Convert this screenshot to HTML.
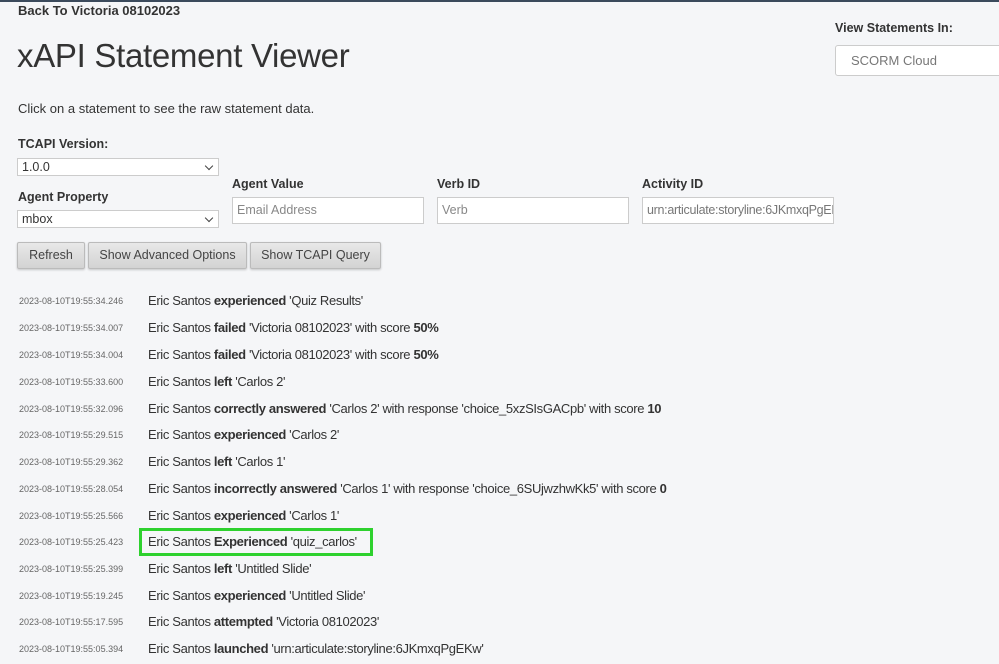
<!DOCTYPE html>
<html><head><meta charset="utf-8"><style>
html,body{margin:0;padding:0}
body{width:999px;height:664px;background:#f5f6f8;font-family:"Liberation Sans",Arial,sans-serif;color:#333;position:relative;overflow:hidden}
.a{position:absolute;white-space:nowrap}
.topbar{position:absolute;left:0;top:0;width:999px;height:2px;background:#3b4a5c}
.lbl{font-weight:bold;font-size:12.5px;color:#333}
.sel{position:absolute;background:#fff;border:1px solid #ccc;font-size:12.5px;line-height:17px;padding-left:4px;box-sizing:border-box;height:18px}
.sel:after{content:"";position:absolute;right:6px;top:4px;width:5px;height:5px;border-right:1.3px solid #444;border-bottom:1.3px solid #444;transform:rotate(45deg)}
.inp{position:absolute;height:27px;background:#fff;border:1px solid #ccc;box-sizing:border-box;font-size:12.5px;color:#888;line-height:25px;padding-left:4px;overflow:hidden;white-space:nowrap}
.btn{position:absolute;top:242px;height:27px;background:linear-gradient(#e8e8e8,#d3d3d3);border:1px solid #bbb;border-radius:2px;box-sizing:border-box;font-size:12.5px;color:#444;line-height:25px;text-align:center;box-shadow:0 1px 2px rgba(0,0,0,.2)}
.ts{position:absolute;left:19px;font-size:9px;color:#666;white-space:nowrap}
.st{position:absolute;left:148px;font-size:13px;color:#333;white-space:nowrap;letter-spacing:-0.35px}
</style></head><body>
<div class="topbar"></div>
<div class="a lbl" style="left:18px;top:3px;font-size:13px">Back To Victoria 08102023</div>
<div class="a" style="left:17px;top:37px;font-size:33px;color:#333;letter-spacing:-0.3px">xAPI Statement Viewer</div>
<div class="a" style="left:18px;top:101px;font-size:13px">Click on a statement to see the raw statement data.</div>
<div class="a lbl" style="left:18px;top:137px">TCAPI Version:</div>
<div class="sel" style="left:17px;top:158px;width:202px">1.0.0</div>
<div class="a lbl" style="left:18px;top:190px">Agent Property</div>
<div class="sel" style="left:17px;top:210px;width:202px">mbox</div>
<div class="a lbl" style="left:232px;top:177px">Agent Value</div>
<div class="inp" style="left:232px;top:197px;width:192px">Email Address</div>
<div class="a lbl" style="left:437px;top:177px">Verb ID</div>
<div class="inp" style="left:437px;top:197px;width:192px">Verb</div>
<div class="a lbl" style="left:642px;top:177px">Activity ID</div>
<div class="inp" style="left:642px;top:197px;width:192px;color:#777;letter-spacing:-0.3px">urn:articulate:storyline:6JKmxqPgEKw</div>
<div class="a lbl" style="left:835px;top:21px">View Statements In:</div>
<div class="inp" style="left:835px;top:45px;width:180px;height:31px;line-height:29px;padding-left:15px;border-radius:3px;font-size:13px;color:#777">SCORM Cloud</div>
<div class="btn" style="left:17px;width:68px">Refresh</div>
<div class="btn" style="left:88px;width:159px">Show Advanced Options</div>
<div class="btn" style="left:250px;width:131px">Show TCAPI Query</div>

<div class="ts" style="top:296px">2023-08-10T19:55:34.246</div><div class="st" style="top:293px">Eric Santos <b>experienced</b> 'Quiz Results'</div>
<div class="ts" style="top:323px">2023-08-10T19:55:34.007</div><div class="st" style="top:320px">Eric Santos <b>failed</b> 'Victoria 08102023' with score <b>50%</b></div>
<div class="ts" style="top:350px">2023-08-10T19:55:34.004</div><div class="st" style="top:347px">Eric Santos <b>failed</b> 'Victoria 08102023' with score <b>50%</b></div>
<div class="ts" style="top:377px">2023-08-10T19:55:33.600</div><div class="st" style="top:374px">Eric Santos <b>left</b> 'Carlos 2'</div>
<div class="ts" style="top:404px">2023-08-10T19:55:32.096</div><div class="st" style="top:401px">Eric Santos <b>correctly answered</b> 'Carlos 2' with response 'choice_5xzSIsGACpb' with score <b>10</b></div>
<div class="ts" style="top:430px">2023-08-10T19:55:29.515</div><div class="st" style="top:427px">Eric Santos <b>experienced</b> 'Carlos 2'</div>
<div class="ts" style="top:457px">2023-08-10T19:55:29.362</div><div class="st" style="top:454px">Eric Santos <b>left</b> 'Carlos 1'</div>
<div class="ts" style="top:484px">2023-08-10T19:55:28.054</div><div class="st" style="top:481px">Eric Santos <b>incorrectly answered</b> 'Carlos 1' with response 'choice_6SUjwzhwKk5' with score <b>0</b></div>
<div class="ts" style="top:511px">2023-08-10T19:55:25.566</div><div class="st" style="top:508px">Eric Santos <b>experienced</b> 'Carlos 1'</div>
<div class="ts" style="top:537px">2023-08-10T19:55:25.423</div><div class="st" style="top:534px">Eric Santos <b>Experienced</b> 'quiz_carlos'</div>
<div class="a" style="left:139px;top:528px;width:228px;height:22px;border:3px solid #2ed12e"></div>
<div class="ts" style="top:564px">2023-08-10T19:55:25.399</div><div class="st" style="top:561px">Eric Santos <b>left</b> 'Untitled Slide'</div>
<div class="ts" style="top:591px">2023-08-10T19:55:19.245</div><div class="st" style="top:588px">Eric Santos <b>experienced</b> 'Untitled Slide'</div>
<div class="ts" style="top:617px">2023-08-10T19:55:17.595</div><div class="st" style="top:614px">Eric Santos <b>attempted</b> 'Victoria 08102023'</div>
<div class="ts" style="top:644px">2023-08-10T19:55:05.394</div><div class="st" style="top:641px">Eric Santos <b>launched</b> 'urn:articulate:storyline:6JKmxqPgEKw'</div>
</body></html>
